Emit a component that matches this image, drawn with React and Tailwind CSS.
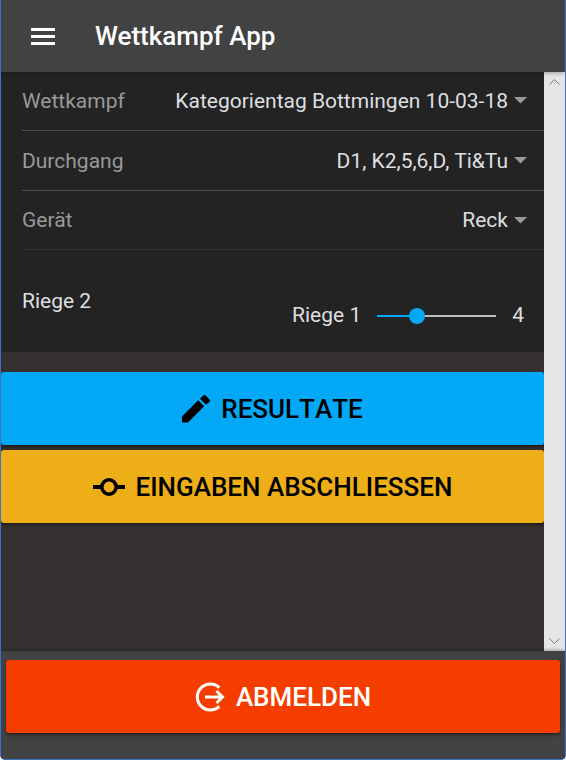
import { useState } from "react";

const fields = [
  { id: "wettkampf", label: "Wettkampf", value: "Kategorientag Bottmingen 10-03-18" },
  { id: "durchgang", label: "Durchgang", value: "D1, K2,5,6,D, Ti&Tu" },
  { id: "geraet", label: "Gerät", value: "Reck" },
];

function SelectRow({ id, label, value, last }) {
  return (
    <div
      className={
        last
          ? "flex h-[59px] items-center border-b border-[#333333] pr-[17px]"
          : "flex h-[60px] items-center border-b border-[#4d4d4d] pr-[17px]"
      }
    >
      <label htmlFor={id} className="shrink-0 text-[#999999]">
        {label}
      </label>
      <select
        id={id}
        defaultValue={value}
        className="min-w-0 flex-1 cursor-pointer appearance-none bg-transparent pr-[6px] text-[#dedfe0] outline-none [text-align-last:right]"
      >
        <option className="bg-[#222222]">{value}</option>
      </select>
      <svg className="h-[7px] w-[13px] shrink-0" viewBox="0 0 13 7" fill="#999999" aria-hidden="true">
        <path d="M0 0h13L6.500 6.500z" />
      </svg>
    </div>
  );
}

function RiegeSlider() {
  const [riege, setRiege] = useState(2);
  const fill = `${8 + ((riege - 1) * 119) / 3}px`;
  return (
    <div className="flex items-center gap-2 pt-7">
      <label htmlFor="riege">Riege 1</label>
      <input
        id="riege"
        type="range"
        min="1"
        max="4"
        value={riege}
        onChange={(e) => setRiege(Number(e.target.value))}
        style={{ "--fill": fill }}
        className="mt-[2px] h-4 w-[135px] cursor-pointer appearance-none bg-transparent outline-none [&::-webkit-slider-runnable-track]:h-[2px] [&::-webkit-slider-runnable-track]:bg-[linear-gradient(to_right,transparent_8px,#03a9f4_8px,#03a9f4_var(--fill),#bdbdbd_var(--fill),#bdbdbd_127px,transparent_127px)] [&::-webkit-slider-thumb]:-mt-[7px] [&::-webkit-slider-thumb]:size-4 [&::-webkit-slider-thumb]:appearance-none [&::-webkit-slider-thumb]:rounded-full [&::-webkit-slider-thumb]:bg-[#03a9f7]"
      />
      <span>4</span>
    </div>
  );
}

function BigButton({ className, children }) {
  return (
    <button
      type="button"
      className={`flex h-[73px] w-full cursor-pointer items-center justify-center rounded-[3px] text-[26px] font-medium shadow-[0_2px_3px_rgba(0,0,0,0.45)] [font-kerning:none] ${className}`}
    >
      {children}
    </button>
  );
}

function Scrollbar() {
  return (
    <div className="flex w-[21px] shrink-0 flex-col items-center justify-between bg-[#e5e5e5] py-[7px]" aria-hidden="true">
      <svg className="h-[6px] w-[11px]" viewBox="0 0 11 6" fill="none" stroke="#777777">
        <path d="M.5 5.500l5-5 5 5" />
      </svg>
      <svg className="h-[6px] w-[11px]" viewBox="0 0 11 6" fill="none" stroke="#777777">
        <path d="M.5.5l5 5 5-5" />
      </svg>
    </div>
  );
}

export default function App() {
  return (
    <div className="min-h-screen bg-white font-['Roboto',sans-serif] text-[21px] leading-6 text-[#dedfe0]">
      <div className="flex min-h-screen flex-col overflow-hidden rounded-b-[5px] border-x border-b border-[#3a72c8] bg-[#424242]">
        <header className="relative z-10 flex h-[72px] shrink-0 items-center bg-[#424242] pl-[30px] shadow-[0_1px_4px_rgba(0,0,0,0.3)]">
          <button type="button" aria-label="Menü" className="cursor-pointer">
            <svg className="h-[17px] w-6" viewBox="0 0 24 17" fill="#ffffff">
              <path d="M0 0h24v3H0zM0 7h24v3H0zM0 14h24v3H0z" />
            </svg>
          </button>
          <h1 className="pl-10 text-[26px] leading-8 font-medium text-white">Wettkampf App</h1>
        </header>

        <div className="flex flex-1">
          <main className="min-w-0 flex-1 bg-[#363130]">
            <section className="-mt-px bg-[#232323] pl-[21px]">
              {fields.map((f, i) => (
                <SelectRow key={f.id} {...f} last={i === fields.length - 1} />
              ))}
              <div className="flex h-[102px] items-center justify-between pr-5">
                <span>Riege 2</span>
                <RiegeSlider />
              </div>
            </section>

            <div className="flex flex-col gap-[5px] pt-5">
              <BigButton className="gap-[11px] bg-[#03a9f7] text-black">
                <svg className="size-7" viewBox="0 0 28 28" fill="currentColor" aria-hidden="true">
                  <path d="M0 21.500V27.500h6L22.200 11.300l-6-6zM27.500 6.700a1.600 1.600 0 0 0 0-2.300L23.600.5a1.600 1.600 0 0 0-2.300 0l-3.300 3.300 6 6z" />
                </svg>
                RESULTATE
              </BigButton>
              <BigButton className="gap-[11px] bg-[#edae18] text-black">
                <svg className="h-5 w-8" viewBox="0 0 32 20" fill="none" stroke="currentColor" strokeWidth="4" aria-hidden="true">
                  <path d="M0 10h9M23 10h9" />
                  <circle cx="16" cy="10" r="7.200" strokeWidth="3.500" />
                </svg>
                EINGABEN ABSCHLIESSEN
              </BigButton>
            </div>
          </main>
          <Scrollbar />
        </div>

        <footer className="relative shrink-0 bg-[#424242] px-[5px] pt-[9px] pb-[26px] shadow-[0_-1px_3px_rgba(0,0,0,0.3)]">
          <BigButton className="gap-[11px] bg-[#f53d00] text-white">
            <svg className="size-[30px]" viewBox="0 0 30 30" fill="none" stroke="currentColor" strokeWidth="3" aria-hidden="true">
              <path d="M24.300 5.600A13 13 0 1 0 24.300 24.400" />
              <path d="M10 15h17M21.500 9l6 6-6 6" />
            </svg>
            ABMELDEN
          </BigButton>
        </footer>
      </div>
    </div>
  );
}
